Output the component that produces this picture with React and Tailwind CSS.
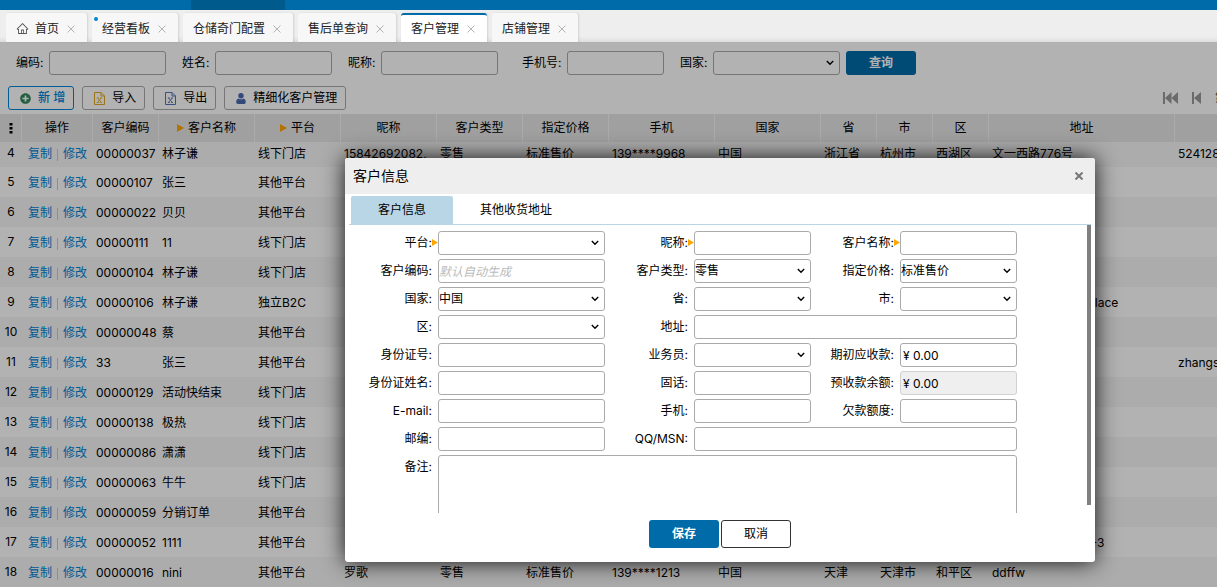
import React from 'react';
import { AiOutlineHome } from 'react-icons/ai';
import { FaPlusCircle } from 'react-icons/fa';

const pageTabs = [
  { label: '首页', home: true },
  { label: '经营看板', dot: true },
  { label: '仓储奇门配置' },
  { label: '售后单查询' },
  { label: '客户管理', active: true },
  { label: '店铺管理' },
];

const columns = [
  { label: '操作', width: 'w-[71px]' },
  { label: '客户编码', width: 'w-[66px]' },
  { label: '客户名称', width: 'w-[96px]', required: true },
  { label: '平台', width: 'w-[86px]', required: true },
  { label: '昵称', width: 'w-[96px]' },
  { label: '客户类型', width: 'w-[86px]' },
  { label: '指定价格', width: 'w-[86px]' },
  { label: '手机', width: 'w-[106px]' },
  { label: '国家', width: 'w-[106px]' },
  { label: '省', width: 'w-[56px]' },
  { label: '市', width: 'w-[56px]' },
  { label: '区', width: 'w-[56px]' },
  { label: '地址', width: 'w-[186px]' },
  { label: '', width: 'w-[120px]' },
];

// code, name, platform, nickname, type, price, mobile, country, province, city, district, address, account
const customers = [
  ['00000037', '林子谦', '线下门店', '15842692082,', '零售', '标准售价', '139****9968', '中国', '浙江省', '杭州市', '西湖区', '文一西路776号', '52412836'],
  ['00000107', '张三', '其他平台'],
  ['00000022', '贝贝', '其他平台'],
  ['00000111', '11', '线下门店'],
  ['00000104', '林子谦', '线下门店'],
  ['00000106', '林子谦', '独立B2C', '', '', '', '', '', '', '', '', '112 Long Market Place'],
  ['00000048', '蔡', '其他平台'],
  ['33', '张三', '其他平台', '', '', '', '', '', '', '', '', '', 'zhangsan'],
  ['00000129', '活动快结束', '线下门店'],
  ['00000138', '极热', '线下门店'],
  ['00000086', '潇潇', '线下门店'],
  ['00000063', '牛牛', '线下门店'],
  ['00000059', '分销订单', '其他平台'],
  ['00000052', '1111', '其他平台', '', '', '', '', '', '', '', '', '余杭区文一西路 12-3'],
  ['00000016', 'nini', '其他平台', '罗歌', '零售', '标准售价', '139****1213', '中国', '天津', '天津市', '和平区', 'ddffw'],
];

const CloseIcon = ({ className, width = 1 }) => (
  <svg viewBox="0 0 8 8" className={className} fill="none" stroke="currentColor" strokeWidth={width}>
    <path d="M0.5 0.5 L7.5 7.5 M7.5 0.5 L0.5 7.5" />
  </svg>
);

const FileIcon = ({ className }) => (
  <svg viewBox="0 0 11 13" className={className} fill="none" stroke="currentColor">
    <path d="M0.5 0.5 H7 L10.5 4 V12.5 H0.5 Z M7 0.5 V4 H10.5" />
    <path d="M3.6 6 L7.2 10.4 M7.2 6 L3.6 10.4 M2.8 5.9 H4.8 M6.2 5.9 H8 M2.8 10.5 H4.8 M6.2 10.5 H8" strokeWidth="0.9" />
  </svg>
);

const UserIcon = ({ className }) => (
  <svg viewBox="0 0 10 11" className={className} fill="currentColor">
    <circle cx="5" cy="2.8" r="2.7" />
    <path d="M2.6 5.4 C3.8 6.6 6.2 6.6 7.4 5.4 C9 5.7 9.8 7 9.8 9 C9.8 10.3 9.2 11 8 11 H2 C0.8 11 0.2 10.3 0.2 9 C0.2 7 1 5.7 2.6 5.4 Z" />
  </svg>
);

const Triangle = ({ className }) => (
  <svg viewBox="0 0 6 6" preserveAspectRatio="none" className={className} fill="currentColor">
    <path d="M0 0 L6 3 L0 6 Z" />
  </svg>
);

const controlClass = 'h-6 w-full rounded-[3px] border border-[#aaa] bg-white text-black outline-none';

const SearchField = ({ id, label, labelWidth = 'w-[33px]', width, className = '' }) => (
  <div className={`flex items-center ${className}`}>
    <label htmlFor={id} className={`${labelWidth} whitespace-nowrap`}>{label}:</label>
    <div className={width}>
      <input id={id} type="text" className={controlClass} />
    </div>
  </div>
);

const Select = ({ id, value = '' }) => (
  <div className="relative w-full">
    <select id={id} defaultValue={value} className={`${controlClass} appearance-none pr-5`}>
      <option value={value}>{value}</option>
    </select>
    <svg viewBox="0 0 8 6" className="pointer-events-none absolute right-1.5 top-[9px] h-1.5 w-2 text-black" fill="none" stroke="currentColor" strokeWidth="1.4">
      <path d="M0.8 1 L4 4.2 L7.2 1" />
    </svg>
  </div>
);

const Field = ({ id, label, type = 'text', span = '', required, value, placeholder, disabled }) => (
  <>
    <label htmlFor={id} className="relative h-6 pr-1.5 text-right leading-6">
      {label}:
      {required && <Triangle className="absolute right-0 top-2 h-[7px] w-1.5 text-[#ffa500]" />}
    </label>
    <div className={span}>
      {type === 'select' && <Select id={id} value={value} />}
      {type === 'textarea' && (
        <textarea id={id} className="block h-20 w-full resize-none rounded-[3px] border border-[#aaa] bg-white outline-none" />
      )}
      {type === 'text' && (
        <input
          id={id}
          type="text"
          defaultValue={value}
          placeholder={placeholder}
          disabled={disabled}
          className={`${controlClass} ${value ? 'pl-0.5' : ''} placeholder:text-[#bbb] placeholder:italic disabled:border-[#d2d2d2] disabled:bg-[#efefef]`}
        />
      )}
    </div>
  </>
);

const PageTabs = () => (
  <nav className="flex h-8 items-end gap-[5px] bg-[#eee] pl-1.5 shadow-[inset_0_-6px_6px_-6px_rgba(0,0,0,0.15)]">
    {pageTabs.map((tab) => (
      <div
        key={tab.label}
        className={`relative flex h-[29px] items-center rounded-t-[3px] pl-2.5 pr-3 shadow-[1px_0_2px_rgba(0,0,0,0.12)] ${tab.active ? 'border-t-2 border-[#006ba9] bg-white' : 'bg-[#f7f7f7] pt-0.5'}`}
      >
        {tab.dot && <span className="absolute left-0.5 top-1 size-1 rounded-full bg-[#0084d6]" />}
        {tab.home && <AiOutlineHome className="mr-1.5 size-[13px] text-[#555]" />}
        <a href="#tab" className="text-[#222]">{tab.label}</a>
        <button type="button" aria-label={`关闭${tab.label}`} className="ml-2 text-[#aaa]">
          <CloseIcon className="size-2" width={0.9} />
        </button>
      </div>
    ))}
  </nav>
);

const SearchBar = () => (
  <form className="flex items-center gap-4 pl-4 pt-[9px]">
    <SearchField id="q-code" label="编码" width="w-[117px]" />
    <SearchField id="q-name" label="姓名" width="w-[117px]" />
    <SearchField id="q-nick" label="昵称" width="w-[117px]" />
    <SearchField id="q-mobile" label="手机号" labelWidth="w-[45px]" width="w-[97px]" className="ml-2" />
    <div className="flex items-center">
      <label htmlFor="q-country" className="w-[33px] whitespace-nowrap">国家:</label>
      <div className="w-[127px]">
        <Select id="q-country" />
      </div>
      <button type="button" className="ml-1.5 h-6 w-[70px] rounded-[3px] bg-[#006ba9] font-bold text-white">查询</button>
    </div>
  </form>
);

const toolButton = 'flex h-6 shrink-0 items-center gap-[7px] rounded-[3px] border pl-[11px] pr-2';

const Toolbar = () => (
  <div className="flex items-center overflow-hidden pl-2 pt-[11px]">
    <div className="flex gap-2">
      <button type="button" className={`${toolButton} border-[#0084d6] font-medium text-[#0084d6]`}>
        <FaPlusCircle className="size-[11px] text-[#31895b]" />
        新 增
      </button>
      <button type="button" className={`${toolButton} border-[#aaa]`}>
        <FileIcon className="h-[13px] w-[11px] text-[#e0a820]" />
        导入
      </button>
      <button type="button" className={`${toolButton} border-[#aaa]`}>
        <FileIcon className="h-[13px] w-[11px] text-[#5470b8]" />
        导出
      </button>
      <button type="button" className={`${toolButton} border-[#aaa]`}>
        <UserIcon className="h-[11px] w-2.5 text-[#4a68b0]" />
        精细化客户管理
      </button>
    </div>
    <div className="-mr-2.5 ml-auto flex shrink-0 items-center text-[#9a9a9a]">
      <button type="button" aria-label="首页" className="mr-3.5">
        <svg viewBox="0 0 15 12" className="h-3 w-[15px]" fill="currentColor">
          <path d="M0 0 H2 V12 H0 Z M2 6 L8.5 0 V12 Z M8.5 6 L15 0 V12 Z" />
        </svg>
      </button>
      <button type="button" aria-label="上一页" className="mr-3.5">
        <svg viewBox="0 0 9 12" className="h-3 w-[9px]" fill="currentColor">
          <path d="M0 0 H2 V12 H0 Z M2 6 L9 0 V12 Z" />
        </svg>
      </button>
      <span className="text-black">第</span>
    </div>
  </div>
);

const CustomerTable = () => (
  <div className="mt-1 overflow-hidden">
    <table className="w-[1295px] table-fixed border-separate border-spacing-0">
      <thead>
        <tr className="h-7 bg-[#e6e6e6]">
          <th className="w-[22px] border-r border-[#f5f5f5]">
            <svg viewBox="0 0 4 12" className="mx-auto h-3 w-1" fill="currentColor">
              <path d="M0.5 1 H3.5 V3.5 H0.5 Z M0.5 5 H3.5 V7.5 H0.5 Z M0.5 9 H3.5 V11.5 H0.5 Z" />
            </svg>
          </th>
          {columns.map((col) => (
            <th key={col.label} className={`${col.width} border-r border-[#f5f5f5] text-center font-normal`}>
              {col.required && <Triangle className="mb-0.5 mr-1 inline h-2 w-[7px] text-[#ffa500]" />}
              {col.label}
            </th>
          ))}
        </tr>
      </thead>
      <tbody>
        {customers.map((row, i) => (
          <tr key={row[0]} className="h-[30px] whitespace-nowrap odd:bg-[#f7f7f7] first:h-[25px] first:[&>td]:pb-[3px]">
            <td className="text-center">{i + 4}</td>
            <td className="pt-0.5 text-center">
              <a href="#copy" className="text-[#0084d6]">复制</a>
              <span className="mx-[5px] inline-block h-3 w-px bg-[#ccc] align-middle" />
              <a href="#edit" className="text-[#0084d6]">修改</a>
            </td>
            {columns.slice(1).map((col, c) => (
              <td key={col.label} className="overflow-hidden pl-[3px] pt-0.5">{row[c]}</td>
            ))}
          </tr>
        ))}
      </tbody>
    </table>
  </div>
);

const CustomerDialog = () => (
  <div
    role="dialog"
    aria-labelledby="dialog-title"
    className="absolute left-[345px] top-[116px] flex w-[750px] flex-col overflow-hidden rounded-[3px] bg-white shadow-[0_0_22px_rgba(0,0,0,0.9)]"
  >
    <div className="flex h-9 items-center justify-between bg-[#eee] pl-2 pr-3">
      <h2 id="dialog-title" className="text-sm">客户信息</h2>
      <button type="button" aria-label="关闭" className="text-[#777]">
        <CloseIcon className="size-2" width={2} />
      </button>
    </div>

    <div className="mx-1 mt-0.5 flex h-[29px] border-b border-[#b8d6e6] pl-0.5">
      <button type="button" className="w-[102px] rounded-t-[2px] bg-[#b8d6e6]">客户信息</button>
      <button type="button" className="w-[126px]">其他收货地址</button>
    </div>

    <div className="mx-1 flex h-72 items-start justify-between overflow-hidden">
      <form className="grid grid-cols-[89px_167px_89px_117px_89px_117px] gap-y-1 pt-1.5">
        <Field id="platform" label="平台" type="select" required />
        <Field id="nick" label="昵称" required />
        <Field id="name" label="客户名称" required />

        <Field id="code" label="客户编码" placeholder="默认自动生成" />
        <Field id="type" label="客户类型" type="select" value="零售" />
        <Field id="price" label="指定价格" type="select" value="标准售价" />

        <Field id="country" label="国家" type="select" value="中国" />
        <Field id="province" label="省" type="select" />
        <Field id="city" label="市" type="select" />

        <Field id="district" label="区" type="select" />
        <Field id="address" label="地址" span="col-span-3" />

        <Field id="id-no" label="身份证号" />
        <Field id="salesman" label="业务员" type="select" />
        <Field id="receivable" label="期初应收款" value="¥ 0.00" />

        <Field id="id-name" label="身份证姓名" />
        <Field id="phone" label="固话" />
        <Field id="prepaid" label="预收款余额" value="¥ 0.00" disabled />

        <Field id="email" label="E-mail" />
        <Field id="mobile" label="手机" />
        <Field id="credit" label="欠款额度" />

        <Field id="zip" label="邮编" />
        <Field id="qq" label="QQ/MSN" span="col-span-3" />

        <Field id="remark" label="备注" type="textarea" span="col-span-5" />
      </form>
      <div className="h-[280px] w-1 bg-[#808080]" />
    </div>

    <div className="flex justify-center gap-0.5 pb-3.5 pt-[7px]">
      <button type="button" className="h-7 w-[70px] rounded-[3px] bg-[#006ba9] font-bold text-white">保存</button>
      <button type="button" className="h-7 w-[70px] rounded-[3px] border border-[#333] bg-white">取消</button>
    </div>
  </div>
);

const App = () => (
  <div className="flex h-screen flex-col overflow-hidden bg-white font-[Inter,'Noto_Sans_CJK_SC',sans-serif] text-xs text-black">
    <header className="h-2.5 shrink-0 bg-[#006ba9] pl-[191px]">
      <div className="h-full w-[94px] bg-[#005a8c]" />
    </header>
    <div className="shrink-0">
      <PageTabs />
    </div>
    <main className="relative min-h-0 flex-1 overflow-hidden">
      <SearchBar />
      <Toolbar />
      <CustomerTable />
      <div className="absolute inset-0 bg-black/30" />
      <CustomerDialog />
    </main>
  </div>
);

export default App;
